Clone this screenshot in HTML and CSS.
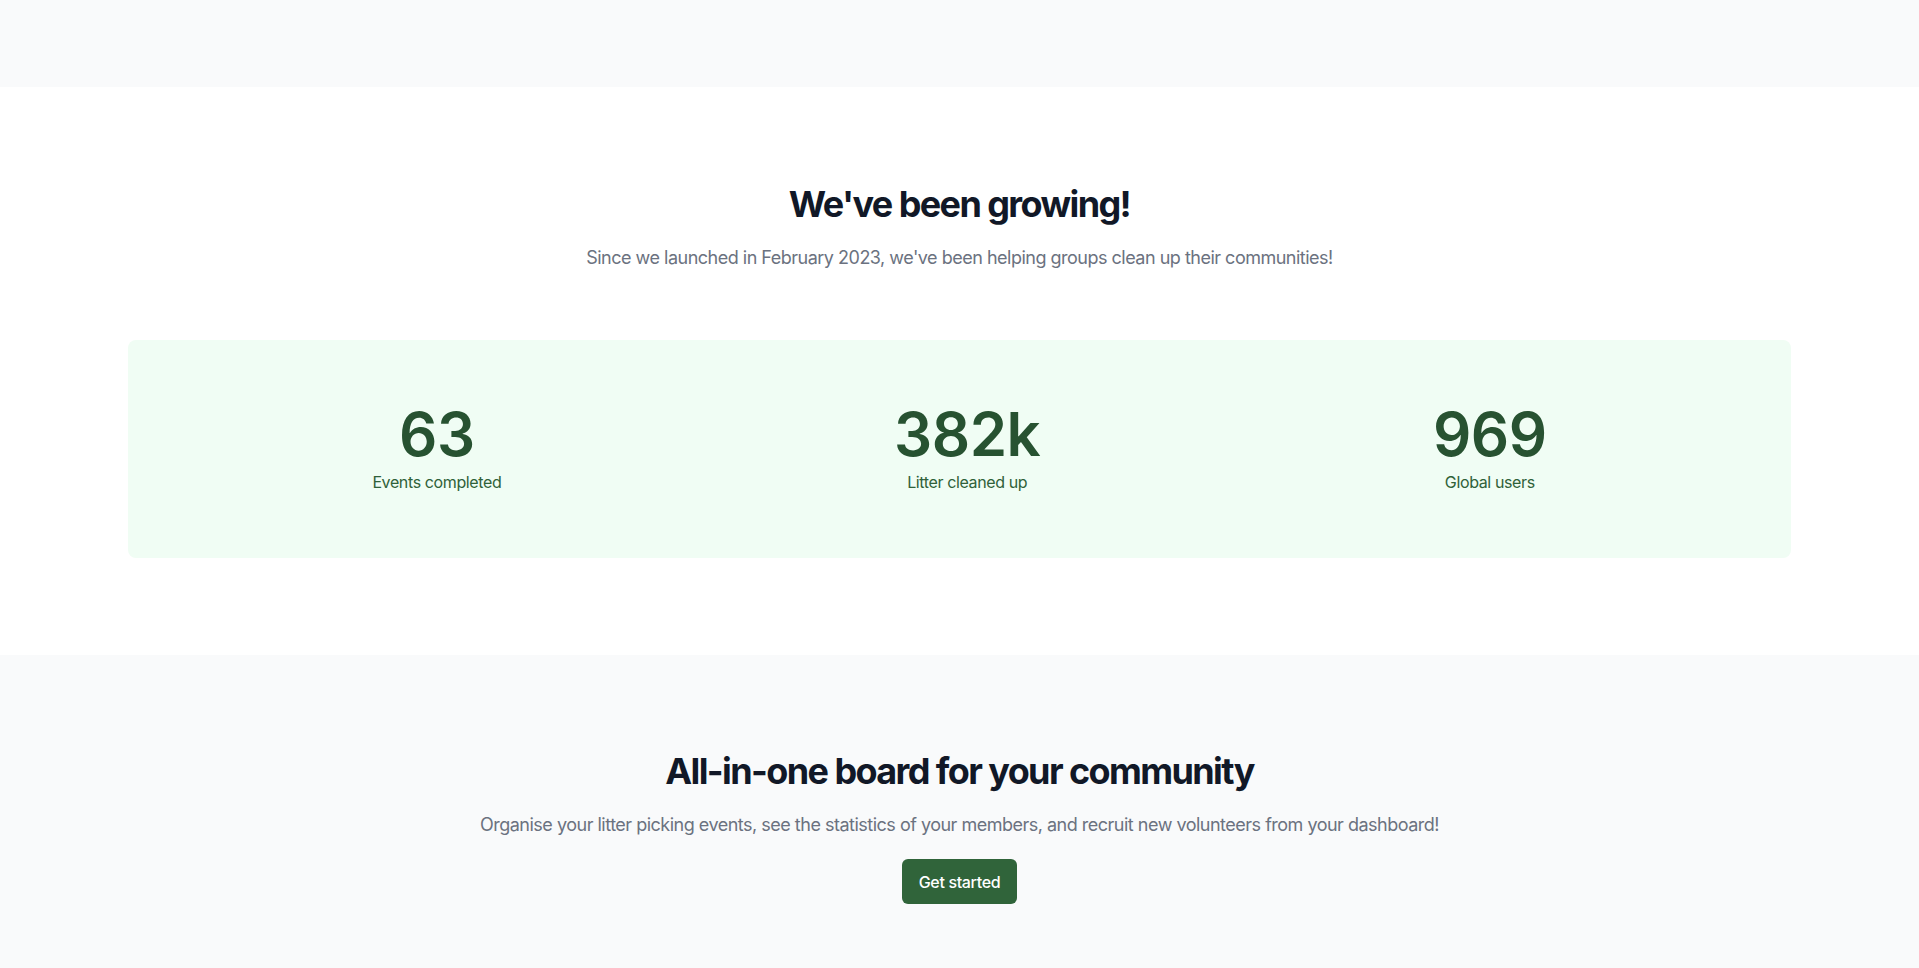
FILE: index.html
```html
<!DOCTYPE html>
<html lang="en">
<head>
<meta charset="utf-8">
<title>We've been growing!</title>
<link rel="stylesheet" href="styles.css">
</head>
<body>
  <div class="topbar"></div>
  <section class="stats-section">
    <div class="intro">
      <h2 class="title">We've been growing!</h2>
      <p class="lead">Since we launched in February 2023, we've been helping groups clean up their communities!</p>
    </div>
    <dl class="stats">
      <div class="stat">
        <dd class="stat-value">63</dd>
        <dt class="stat-label">Events completed</dt>
      </div>
      <div class="stat">
        <dd class="stat-value">382k</dd>
        <dt class="stat-label">Litter cleaned up</dt>
      </div>
      <div class="stat">
        <dd class="stat-value">969</dd>
        <dt class="stat-label">Global users</dt>
      </div>
    </dl>
  </section>
  <section class="cta-section">
    <h2 class="title">All-in-one board for your community</h2>
    <p class="lead">Organise your litter picking events, see the statistics of your members, and recruit new volunteers from your dashboard!</p>
    <a class="button" href="#">Get started</a>
  </section>
</body>
</html>
```

FILE: styles.css
```css
* { box-sizing: border-box; }

html, body {
  margin: 0;
  padding: 0;
}

body {
  font-family: Inter, "Noto Sans", "Liberation Sans", sans-serif;
  background: #ffffff;
  color: #111827;
}

.topbar {
  height: 87px;
  background: #f9fafb;
}

.stats-section {
  background: #ffffff;
  padding: 97px 128px 97px;
}

.intro {
  display: flex;
  flex-direction: column;
  align-items: center;
  text-align: center;
}

.title {
  margin: 0;
  font-size: 36px;
  line-height: 40px;
  font-weight: 700;
  letter-spacing: -1.6px;
  color: #111827;
}

.lead {
  margin: 18px 0 0;
  font-size: 18px;
  line-height: 32px;
  letter-spacing: -0.5px;
  color: #6b7280;
}

.stats {
  margin: 66px 0 0;
  padding: 64px 48px;
  background: #f0fdf4;
  border-radius: 8px;
  display: flex;
  justify-content: space-around;
}

.stat {
  display: flex;
  flex-direction: column;
  align-items: center;
  gap: 6px;
}

.stat-value {
  margin: 0;
  font-size: 60px;
  line-height: 60px;
  font-weight: 600;
  letter-spacing: -0.5px;
  color: #275231;
}

.stat-label {
  margin: 0;
  font-size: 16px;
  line-height: 24px;
  letter-spacing: -0.38px;
  color: #2f6139;
}

.cta-section {
  background: #f9fafb;
  padding: 96px 24px 96px;
  display: flex;
  flex-direction: column;
  align-items: center;
  text-align: center;
}

.button {
  margin-top: 18px;
  display: inline-block;
  padding: 10.5px 17px;
  font-size: 16px;
  line-height: 24px;
  font-weight: 500;
  letter-spacing: -0.35px;
  color: #ffffff;
  background: #30643a;
  border-radius: 6px;
  text-decoration: none;
}
```
